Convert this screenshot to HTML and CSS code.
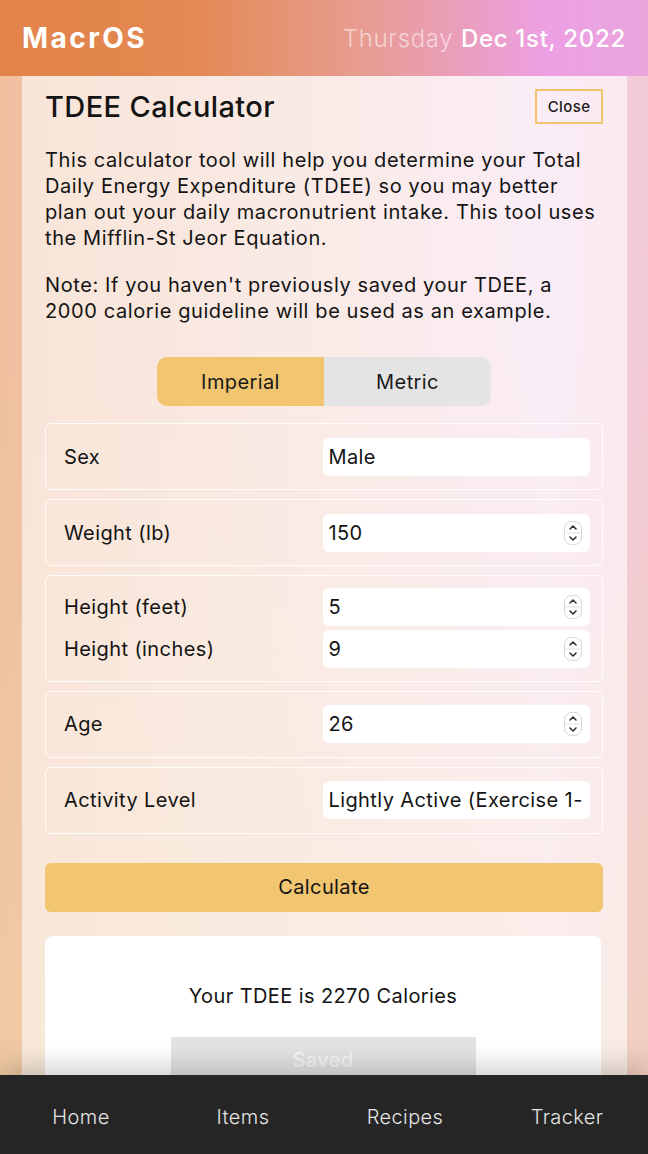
FILE: index.html
```html
<!DOCTYPE html>
<html lang="en">
<head>
<meta charset="utf-8">
<title>MacrOS - TDEE Calculator</title>
<link rel="stylesheet" href="styles.css">
</head>
<body>
<div class="app">
  <header class="topbar">
    <div class="brand">MacrOS</div>
    <div class="date"><span class="day">Thursday</span> <span class="full">Dec 1st, 2022</span></div>
  </header>

  <main class="main">
    <section class="panel">
      <div class="panel-head">
        <h1 class="title">TDEE Calculator</h1>
        <button class="close-btn">Close</button>
      </div>
      <p class="desc">This calculator tool will help you determine your Total Daily Energy Expenditure (TDEE) so you may better plan out your daily macronutrient intake. This tool uses the Mifflin-St Jeor Equation.</p>
      <p class="desc note">Note: If you haven't previously saved your TDEE, a 2000 calorie guideline will be used as an example.</p>

      <div class="toggle">
        <button class="seg active">Imperial</button>
        <button class="seg">Metric</button>
      </div>

      <div class="rows">
        <div class="row">
          <label class="label">Sex</label>
          <div class="field"><input class="inp" type="text" value="Male" readonly></div>
        </div>
        <div class="row">
          <label class="label">Weight (lb)</label>
          <div class="field"><input class="inp" type="text" value="150" readonly>
            <svg class="step" viewBox="0 0 18 24" width="18" height="24"><rect x="0.5" y="0.5" width="17" height="23" rx="7" fill="#fff" stroke="#d6d6d6"/><line x1="2" y1="12" x2="16" y2="12" stroke="#e2e2e2"/><path d="M6 8 L9 5 L12 8" fill="none" stroke="#333" stroke-width="1.6" stroke-linecap="round" stroke-linejoin="round"/><path d="M6 16 L9 19 L12 16" fill="none" stroke="#333" stroke-width="1.6" stroke-linecap="round" stroke-linejoin="round"/></svg>
          </div>
        </div>
        <div class="row row-double">
          <label class="label">Height (feet)</label>
          <div class="field"><input class="inp" type="text" value="5" readonly>
            <svg class="step" viewBox="0 0 18 24" width="18" height="24"><rect x="0.5" y="0.5" width="17" height="23" rx="7" fill="#fff" stroke="#d6d6d6"/><line x1="2" y1="12" x2="16" y2="12" stroke="#e2e2e2"/><path d="M6 8 L9 5 L12 8" fill="none" stroke="#333" stroke-width="1.6" stroke-linecap="round" stroke-linejoin="round"/><path d="M6 16 L9 19 L12 16" fill="none" stroke="#333" stroke-width="1.6" stroke-linecap="round" stroke-linejoin="round"/></svg>
          </div>
          <label class="label">Height (inches)</label>
          <div class="field"><input class="inp" type="text" value="9" readonly>
            <svg class="step" viewBox="0 0 18 24" width="18" height="24"><rect x="0.5" y="0.5" width="17" height="23" rx="7" fill="#fff" stroke="#d6d6d6"/><line x1="2" y1="12" x2="16" y2="12" stroke="#e2e2e2"/><path d="M6 8 L9 5 L12 8" fill="none" stroke="#333" stroke-width="1.6" stroke-linecap="round" stroke-linejoin="round"/><path d="M6 16 L9 19 L12 16" fill="none" stroke="#333" stroke-width="1.6" stroke-linecap="round" stroke-linejoin="round"/></svg>
          </div>
        </div>
        <div class="row">
          <label class="label">Age</label>
          <div class="field"><input class="inp" type="text" value="26" readonly>
            <svg class="step" viewBox="0 0 18 24" width="18" height="24"><rect x="0.5" y="0.5" width="17" height="23" rx="7" fill="#fff" stroke="#d6d6d6"/><line x1="2" y1="12" x2="16" y2="12" stroke="#e2e2e2"/><path d="M6 8 L9 5 L12 8" fill="none" stroke="#333" stroke-width="1.6" stroke-linecap="round" stroke-linejoin="round"/><path d="M6 16 L9 19 L12 16" fill="none" stroke="#333" stroke-width="1.6" stroke-linecap="round" stroke-linejoin="round"/></svg>
          </div>
        </div>
        <div class="row">
          <label class="label">Activity Level</label>
          <div class="field"><input class="inp" type="text" value="Lightly Active (Exercise 1-3 days/week)" readonly></div>
        </div>
      </div>

      <button class="calc-btn">Calculate</button>

      <div class="result">
        <p class="result-text">Your TDEE is 2270 Calories</p>
        <button class="saved-btn">Saved</button>
      </div>
    </section>
  </main>

  <nav class="tabbar">
    <a class="tab">Home</a>
    <a class="tab">Items</a>
    <a class="tab">Recipes</a>
    <a class="tab">Tracker</a>
  </nav>
</div>
</body>
</html>
```

FILE: styles.css
```css
* { box-sizing: border-box; }

html, body {
  margin: 0;
  height: 100%;
}

body {
  font-family: "Inter", "Roboto", "Liberation Sans", sans-serif;
  color: #141414;
  letter-spacing: 0.4px;
  background:
    linear-gradient(to bottom, rgba(240, 214, 170, 0) 30%, rgba(240, 212, 168, 0.55) 100%),
    linear-gradient(to right, #efbf9f 0%, #f2cfc6 50%, #f4d3ea 85%, #f1c9d6 100%);
}

.app {
  height: 100vh;
  display: flex;
  flex-direction: column;
  overflow: hidden;
}

.topbar {
  height: 76px;
  flex: none;
  display: flex;
  align-items: center;
  justify-content: space-between;
  padding: 0 22px;
  background: linear-gradient(to right, #e2834b 0%, #e38850 28%, #e79c8e 55%, #eda0e4 85%, #e9a5dc 100%);
  color: #fff;
}

.brand {
  font-size: 28px;
  font-weight: 700;
  letter-spacing: 2.5px;
}

.date {
  font-size: 24px;
  font-weight: 400;
  letter-spacing: 0.7px;
}

.date .day { opacity: 0.55; font-weight: 300; }
.date .full { font-weight: 500; }

.main {
  flex: 1;
  min-height: 0;
  overflow: hidden;
  padding: 0 21px 0 22px;
}

.panel {
  background: rgba(255, 255, 255, 0.58);
  padding: 13px 24px 0 23px;
  min-height: 100%;
}

.panel-head {
  display: flex;
  align-items: center;
  justify-content: space-between;
  height: 35px;
}

.title {
  margin: 0;
  font-size: 29px;
  font-weight: 500;
  letter-spacing: 0.4px;
}

.close-btn {
  font-family: inherit;
  font-size: 15px;
  font-weight: 500;
  letter-spacing: 0.4px;
  color: #1a1a1a;
  background: transparent;
  border: 2px solid #f2c46e;
  width: 68px;
  height: 35px;
  padding: 0;
}

.desc {
  margin: 23px 0 0;
  font-size: 20px;
  line-height: 26px;
  letter-spacing: 0.6px;
}

.note { margin-top: 21px; }

.toggle {
  margin: 33px auto 0;
  width: 334px;
  height: 49px;
  display: flex;
  border-radius: 10px;
  overflow: hidden;
}

.seg {
  flex: 1;
  border: none;
  font-family: inherit;
  font-size: 20px;
  letter-spacing: 0.4px;
  color: #1a1a1a;
  background: #e4e4e4;
}

.seg.active { background: #f2c570; }

.rows {
  margin-top: 17px;
  display: flex;
  flex-direction: column;
  gap: 9px;
}

.row {
  display: grid;
  grid-template-columns: 1fr 267px;
  row-gap: 4px;
  align-items: center;
  border: 1.5px solid rgba(255, 255, 255, 0.9);
  border-radius: 6px;
  padding: 13.5px 12.5px 13.5px 18px;
}

.row-double {
  padding-top: 12px;
  padding-bottom: 12.5px;
}

.label {
  font-size: 20px;
}

.field {
  height: 38px;
  background: #fff;
  border-radius: 6px;
  display: flex;
  align-items: center;
  padding: 0 8px 0 6px;
}

.inp {
  flex: 1;
  min-width: 0;
  border: none;
  outline: none;
  background: transparent;
  font-family: inherit;
  font-size: 20px;
  letter-spacing: 0.4px;
  color: #141414;
  padding: 0;
}

.step { flex: none; }

.calc-btn {
  display: block;
  width: 100%;
  margin-top: 29px;
  height: 49px;
  border: none;
  border-radius: 6px;
  background: #f2c570;
  font-family: inherit;
  font-size: 20px;
  letter-spacing: 0.4px;
  color: #141414;
}

.result {
  margin-top: 24px;
  background: #fff;
  border-radius: 8px;
  padding: 48px 0 40px;
  display: flex;
  flex-direction: column;
  align-items: center;
  margin-right: 2px;
}

.result-text {
  margin: 0;
  font-size: 20px;
  line-height: 24px;
}

.saved-btn {
  margin-top: 29px;
  width: 305px;
  height: 46px;
  border: none;
  background: #e4e4e4;
  color: #f6f6f6;
  font-family: inherit;
  font-size: 20px;
  font-weight: 500;
  letter-spacing: 0.4px;
}

.tabbar {
  position: relative;
  z-index: 2;
  flex: none;
  height: 79px;
  background: #252525;
  display: grid;
  grid-template-columns: repeat(4, 1fr);
  align-items: center;
  box-shadow: 0 -6px 30px rgba(0, 0, 0, 0.22);
}

.tab {
  text-align: center;
  color: #e4e4e4;
  font-size: 20px;
  font-weight: 300;
  padding-top: 4px;
}
```
